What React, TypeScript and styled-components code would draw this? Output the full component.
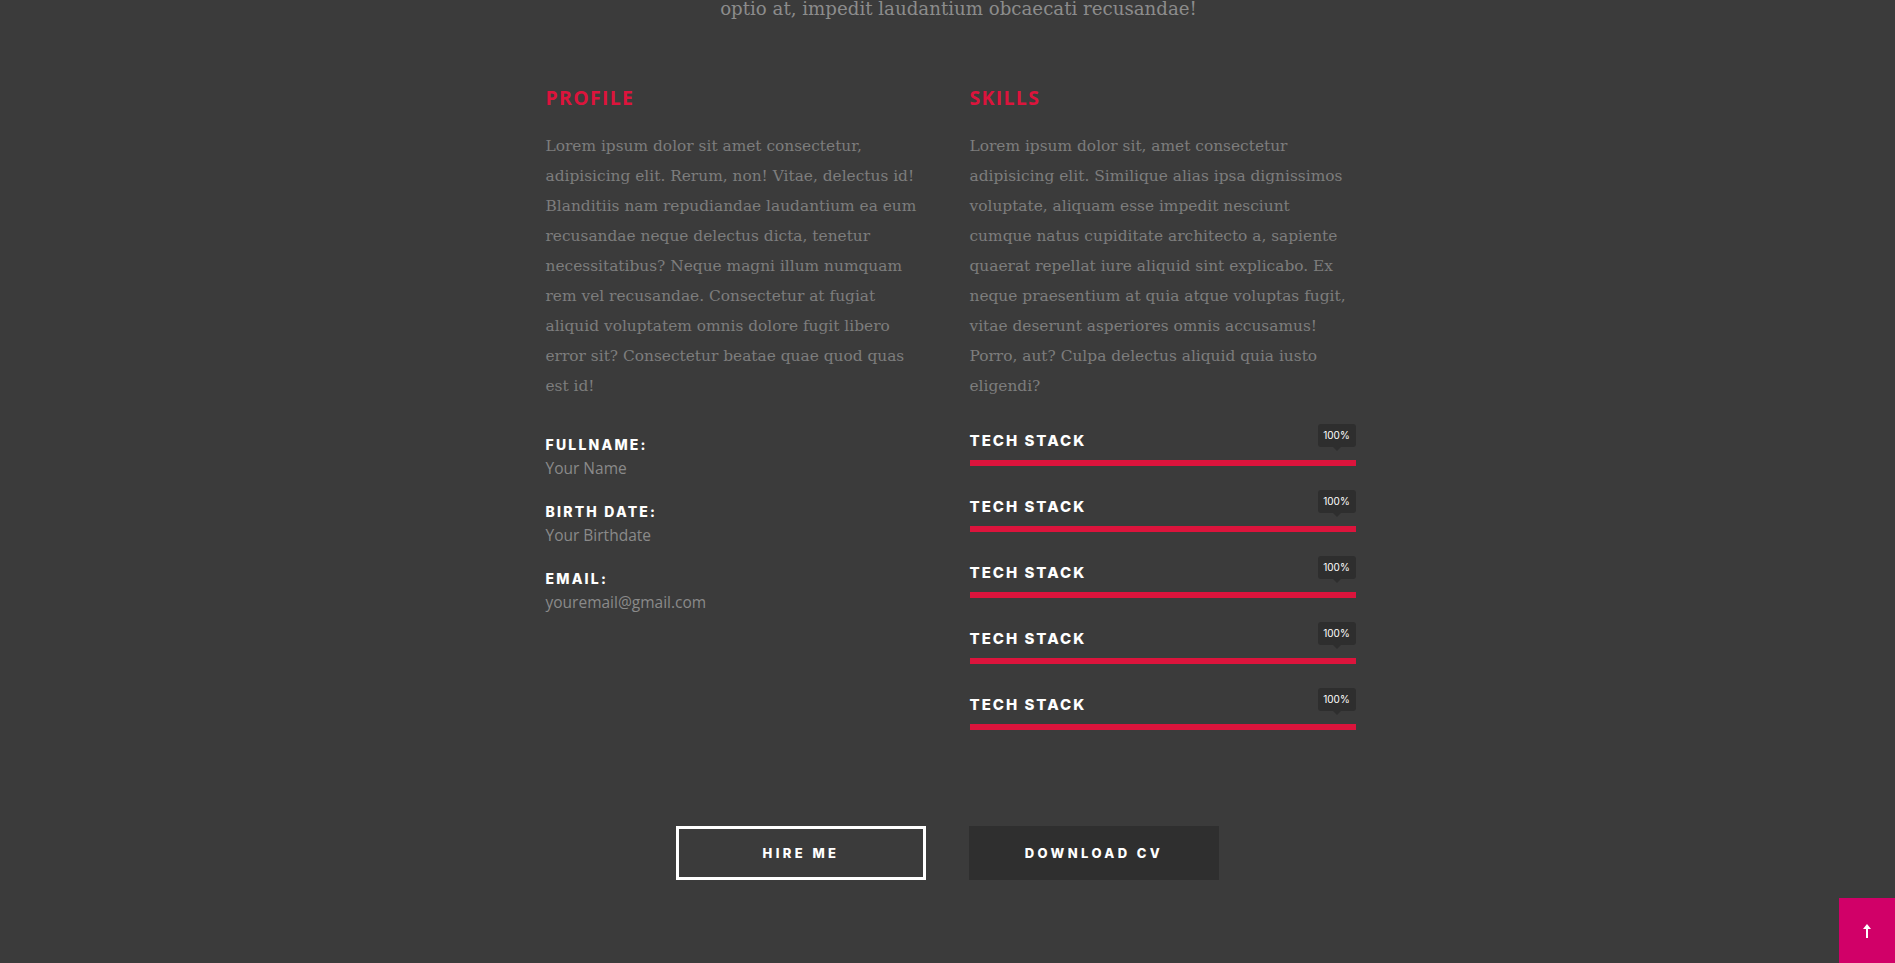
import React from "react";
import styled, { createGlobalStyle } from "styled-components";

const Global = createGlobalStyle`
  html, body { margin: 0; padding: 0; background: #3b3b3b; }
  body { overflow: hidden; }
`;

const Page = styled.div`
  min-height: 963px;
  background: #3b3b3b;
  overflow: hidden;
`;

const IntroLine = styled.p`
  margin: -6px 0 0;
  text-align: center;
  font-family: "DejaVu Serif", serif;
  font-size: 18.2px;
  line-height: 30px;
  color: #8c8c8c;
  padding-left: 22px;
`;

const Columns = styled.div`
  width: 810px;
  margin: 62px 0 0 calc(50% - 402px);
  display: grid;
  grid-template-columns: 386px 386px;
  column-gap: 38px;
`;

const Column = styled.div`
  display: flex;
  flex-direction: column;
`;

const Heading = styled.h2`
  margin: 0;
  font-family: "Open Sans", sans-serif;
  font-weight: 700;
  font-size: 19.5px;
  line-height: 24px;
  letter-spacing: 1.3px;
  color: #dc143c;
`;

const Text = styled.p`
  margin: 21px 0 0;
  font-family: "DejaVu Serif", serif;
  font-size: 15.4px;
  line-height: 30px;
  color: #7d7d7d;
`;

const InfoList = styled.div`
  margin-top: 33px;
  display: flex;
  flex-direction: column;
  gap: 21px;
`;

const Info = styled.div`
  display: flex;
  flex-direction: column;
`;

const Label = styled.span`
  font-family: Inter, sans-serif;
  font-weight: 800;
  font-size: 14px;
  line-height: 22px;
  letter-spacing: 2.2px;
  color: #ffffff;
`;

const Value = styled.span`
  font-family: "Open Sans", sans-serif;
  font-size: 15.5px;
  line-height: 24px;
  color: #8a8a8a;
`;

const SkillList = styled.div`
  margin-top: 29px;
  display: flex;
  flex-direction: column;
`;

const Skill = styled.div`
  position: relative;
  height: 66px;
  display: flex;
  flex-direction: column;
`;

const SkillName = styled.span`
  font-family: Inter, sans-serif;
  font-weight: 800;
  font-size: 15px;
  line-height: 22px;
  letter-spacing: 2px;
  color: #ffffff;
`;

const Track = styled.div`
  margin-top: 8px;
  height: 6px;
  background: #3b3b3b;
`;

const Fill = styled.div`
  height: 100%;
  background: #dc143c;
`;

const Tip = styled.span`
  position: absolute;
  right: 0;
  top: -6px;
  width: 38px;
  height: 23px;
  border-radius: 3px;
  background: #2e2e2e;
  color: #ffffff;
  font-family: Inter, sans-serif;
  font-size: 10px;
  line-height: 23px;
  text-align: center;
  &::after {
    content: "";
    position: absolute;
    left: 50%;
    bottom: -4px;
    margin-left: -4px;
    border-left: 4px solid transparent;
    border-right: 4px solid transparent;
    border-top: 4px solid #2e2e2e;
  }
`;

const Actions = styled.div`
  margin-top: 66px;
  display: flex;
  justify-content: center;
  gap: 43px;
`;

const Button = styled.a<{ $outline?: boolean }>`
  box-sizing: border-box;
  width: 250px;
  height: 54px;
  display: flex;
  align-items: center;
  justify-content: center;
  font-family: Inter, sans-serif;
  font-weight: 800;
  font-size: 13px;
  letter-spacing: 3.4px;
  color: #ffffff;
  text-decoration: none;
  background: ${(p) => (p.$outline ? "transparent" : "#2f2f2f")};
  border: ${(p) => (p.$outline ? "3px solid #ffffff" : "none")};
`;

const ScrollTop = styled.a`
  position: fixed;
  right: 0;
  bottom: 0;
  width: 56px;
  height: 65px;
  background: #d10068;
  display: flex;
  align-items: center;
  justify-content: center;
`;

const skills = [100, 100, 100, 100, 100];

export default function App() {
  return (
    <Page>
      <Global />
      <IntroLine>optio at, impedit laudantium obcaecati recusandae!</IntroLine>
      <Columns>
        <Column>
          <Heading>PROFILE</Heading>
          <Text>
            Lorem ipsum dolor sit amet consectetur, adipisicing elit. Rerum, non! Vitae, delectus id!
            Blanditiis nam repudiandae laudantium ea eum recusandae neque delectus dicta, tenetur
            necessitatibus? Neque magni illum numquam rem vel recusandae. Consectetur at fugiat
            aliquid voluptatem omnis dolore fugit libero error sit? Consectetur beatae quae quod quas
            est id!
          </Text>
          <InfoList>
            <Info>
              <Label>FULLNAME:</Label>
              <Value>Your Name</Value>
            </Info>
            <Info>
              <Label>BIRTH DATE:</Label>
              <Value>Your Birthdate</Value>
            </Info>
            <Info>
              <Label>EMAIL:</Label>
              <Value>youremail@gmail.com</Value>
            </Info>
          </InfoList>
        </Column>
        <Column>
          <Heading>SKILLS</Heading>
          <Text>
            Lorem ipsum dolor sit, amet consectetur adipisicing elit. Similique alias ipsa dignissimos
            voluptate, aliquam esse impedit nesciunt cumque natus cupiditate architecto a, sapiente
            quaerat repellat iure aliquid sint explicabo. Ex neque praesentium at quia atque voluptas
            fugit, vitae deserunt asperiores omnis accusamus! Porro, aut? Culpa delectus aliquid quia
            iusto eligendi?
          </Text>
          <SkillList>
            {skills.map((v, i) => (
              <Skill key={i}>
                <SkillName>TECH STACK</SkillName>
                <Track>
                  <Fill style={{ width: `${v}%` }} />
                </Track>
                <Tip>{v}%</Tip>
              </Skill>
            ))}
          </SkillList>
        </Column>
      </Columns>
      <Actions>
        <Button $outline href="#">HIRE ME</Button>
        <Button href="#">DOWNLOAD CV</Button>
      </Actions>
      <ScrollTop href="#">
        <svg width="10" height="16" viewBox="0 0 10 16">
          <path d="M5 1 L9 6 H6 V15 H4 V6 H1 Z" fill="#ffffff" />
        </svg>
      </ScrollTop>
    </Page>
  );
}
